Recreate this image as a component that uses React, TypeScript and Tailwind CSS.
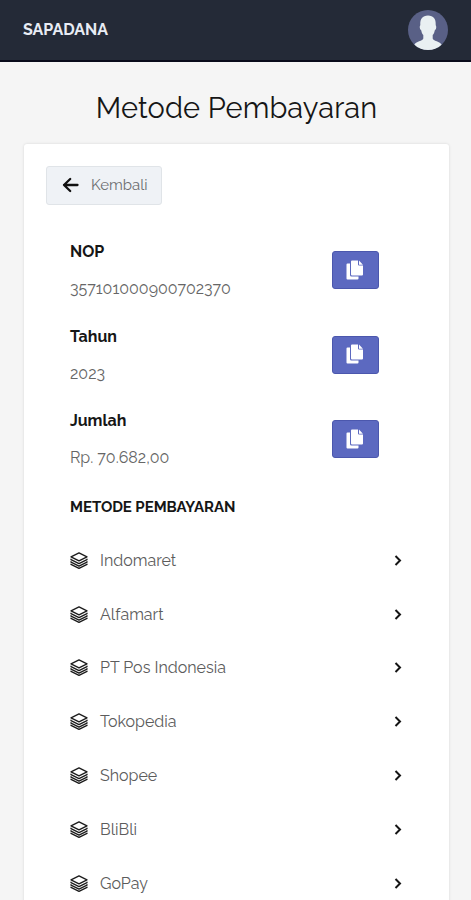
import { memo } from "react";

interface Detail {
  label: string;
  value: string;
}

const details: Detail[] = [
  { label: "NOP", value: "357101000900702370" },
  { label: "Tahun", value: "2023" },
  { label: "Jumlah", value: "Rp. 70.682,00" },
];

const methods: string[] = [
  "Indomaret",
  "Alfamart",
  "PT Pos Indonesia",
  "Tokopedia",
  "Shopee",
  "BliBli",
  "GoPay",
];

const Avatar = () => (
  <svg width="40" height="40" viewBox="0 0 40 40">
    <defs>
      <clipPath id="avatar">
        <circle cx="20" cy="20" r="20" />
      </clipPath>
    </defs>
    <g clipPath="url(#avatar)">
      <rect width="40" height="40" fill="#596086" />
      <path
        d="M20 5.500c5.500 0 8 3.500 7.700 9.200 0 1 .8 1.200.5 3-.2 1.500-1 2.200-1.500 2.800-.3 2-1 3.500-2 4.600v3.400c0 2.400 7.800 3 9 6.500V40H6.300v-5c1-3.500 9-4.100 9-6.500v-3.400c-1-1.100-1.700-2.600-2-4.600-.5-.6-1.300-1.300-1.500-2.800-.3-1.800.5-2 .5-3C12 9 14.500 5.500 20 5.500z"
        fill="#e9f0f2"
      />
    </g>
  </svg>
);

const CopyIcon = () => (
  <svg width="18" height="20" viewBox="0 0 18 20" fill="#fff">
    <path d="M1.500 3.500H4v11.500a1.500 1.500 0 0 0 1.500 1.500h7v2a1 1 0 0 1-1 1h-10a1 1 0 0 1-1-1v-14a1 1 0 0 1 1-1z" />
    <path d="M6 .5h6V4.500a1 1 0 0 0 1 1H17v9a1 1 0 0 1-1 1H6a1 1 0 0 1-1-1v-13a1 1 0 0 1 1-1z" />
    <path d="M13 .6 16.900 4.700H13z" />
  </svg>
);

const LayersIcon = () => (
  <svg
    width="18"
    height="17"
    viewBox="0 0 18 17"
    fill="none"
    stroke="#1c1c1c"
    strokeWidth="1.3"
    strokeLinejoin="round"
    strokeLinecap="round"
  >
    <path d="M9 .8 17 4.800 9 8.800 1 4.800z" />
    <path d="M1 7.200v.5l8 4 8-4v-.5" />
    <path d="M1 9.700v.5l8 4 8-4v-.5" />
    <path d="M1 12.100v.3l8 4 8-4v-.3" />
  </svg>
);

const MethodRow = memo(({ name }: { name: string }) => (
  <li className="flex h-[53.8px] items-center">
    <LayersIcon />
    <span className="ml-[12px] flex-1 pt-px text-[16px] text-[#5c5c5c]">{name}</span>
    <svg width="8" height="11" viewBox="0 0 8 11" fill="none" stroke="#151515" strokeWidth="2">
      <path d="M1.500 1 6 5.500 1.500 10" />
    </svg>
  </li>
));

export default function App() {
  return (
    <div className="h-[900px] overflow-hidden bg-[#f5f5f5] font-['Raleway','Lato',sans-serif] text-[#161616]">
      <header className="flex h-[62px] items-center justify-between border-b-2 border-[#090b1b] bg-[#242a37] px-[23px]">
        <span className="text-[16px] font-bold text-[#e8ecf4]">SAPADANA</span>
        <Avatar />
      </header>

      <h1 className="mt-[25px] h-[56px] pl-[2px] text-center text-[29px] leading-[42px] tracking-[0.1px]">
        Metode Pembayaran
      </h1>

      <main className="ml-[24px] mt-[1px] h-[780px] w-[425px] rounded-[3px] bg-white px-[22px] pt-[22px] shadow-[0_0_3px_rgba(0,0,0,0.13)]">
        <button className="flex h-[39px] w-[116px] items-center rounded-[3px] border border-[#e0e4e8] bg-[#eff2f6] pl-[15px]">
          <svg
            className="mb-[2px]"
            width="17"
            height="16"
            viewBox="0 0 17 16"
            fill="none"
            stroke="#111"
            strokeWidth="2.300"
            strokeLinecap="round"
            strokeLinejoin="round"
          >
            <path d="M8.200 2 2 8l6.200 6M2 8h13.500" />
          </svg>
          <span className="ml-[12px] text-[15px] text-[#6c6e70]">Kembali</span>
        </button>

        <section className="ml-[24px] mr-[25px] mt-[35px]">
          {details.map((item) => (
            <div key={item.label} className="flex h-[84.500px] justify-between pr-[23px]">
              <div>
                <h2 className="text-[16px] font-bold leading-[24px]">{item.label}</h2>
                <p className="mt-[13px] text-[16px] leading-[24px] text-[#666]">
                  {item.value}
                </p>
              </div>
              <button className="mt-[11px] flex h-[38px] w-[47px] items-center justify-center rounded-[3px] border border-[#4b57ad] bg-[#5c69c0] pb-px pr-px">
                <CopyIcon />
              </button>
            </div>
          ))}

          <h2 className="mt-[1px] text-[15px] font-bold leading-[24px] tracking-[-0.05px]">
            METODE PEMBAYARAN
          </h2>
          <ul className="mt-[15px]">
            {methods.map((name) => (
              <MethodRow key={name} name={name} />
            ))}
          </ul>
        </section>
      </main>
    </div>
  );
}
